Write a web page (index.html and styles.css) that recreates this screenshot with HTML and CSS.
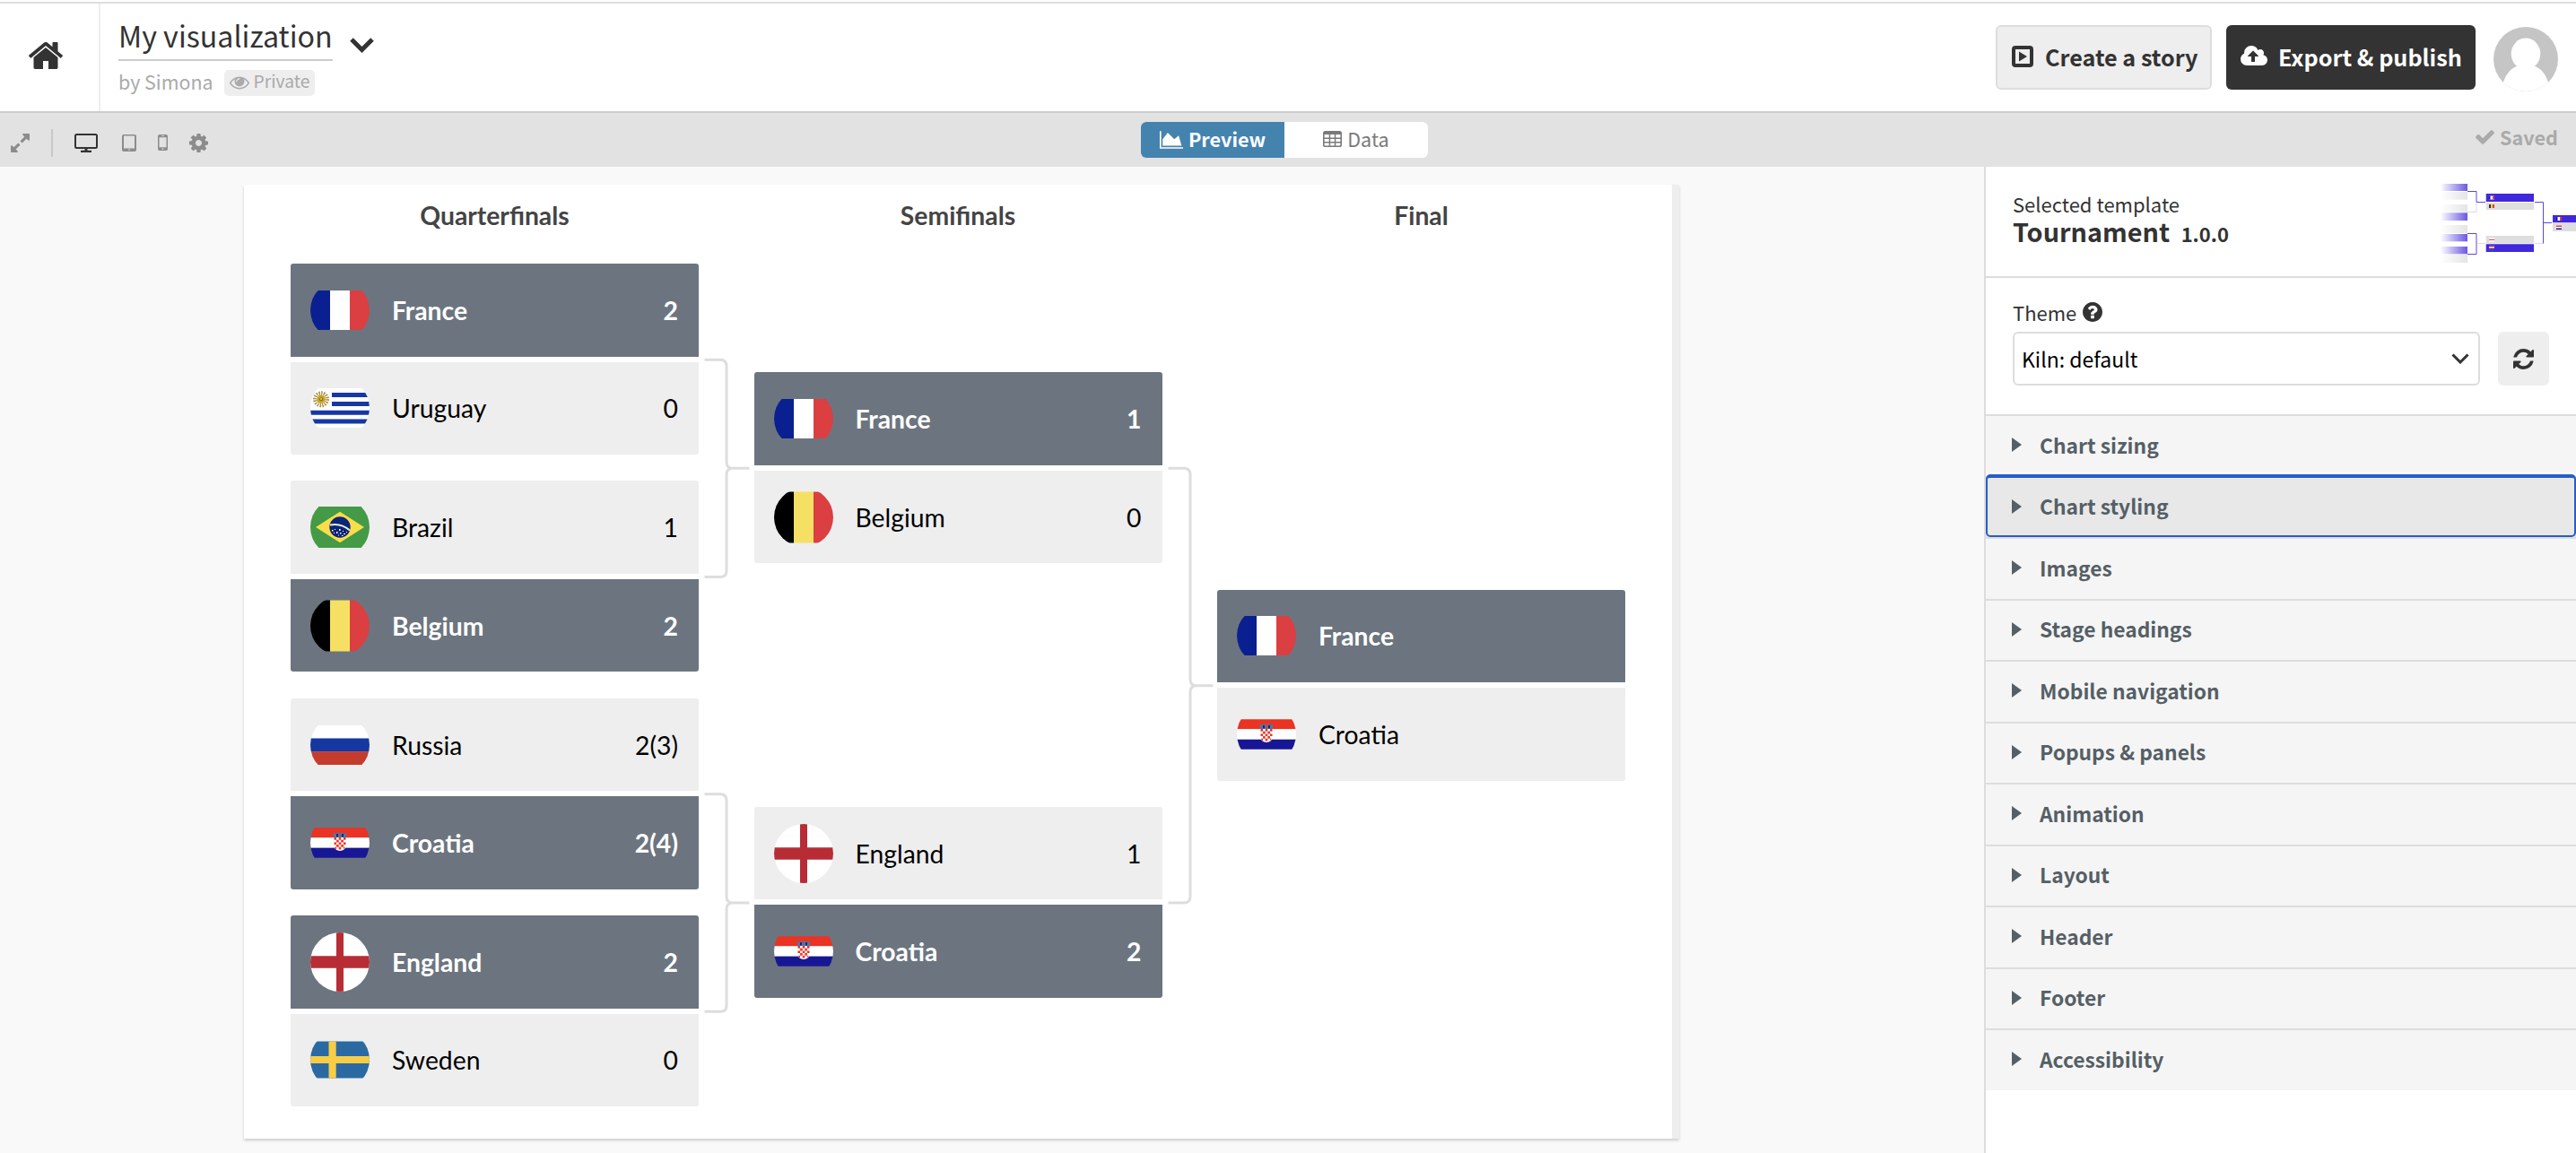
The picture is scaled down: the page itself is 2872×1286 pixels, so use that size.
FILE: index.html
```
<!DOCTYPE html>
<html lang="en">
<head>
  <meta charset="UTF-8" />
  <meta name="viewport" content="width=device-width, initial-scale=1.0" />
  <title>My visualization</title>
  <link rel="stylesheet" href="styles.css">
</head>
<body>
  <!-- flags, each drawn inside a 66x66 circle -->
  <svg class="defs" width="0" height="0">
    <symbol id="france" viewBox="0 0 66 66">
      <path fill="#0a2090" d="M0 11h22v44H0z"/><path fill="#fff" d="M22 11h22v44H22z"/><path fill="#db3f42" d="M44 11h22v44H44z"/>
    </symbol>
    <symbol id="belgium" viewBox="0 0 66 66">
      <path fill="#000" d="M0 4.500h22v57H0z"/><path fill="#f6e063" d="M22 4.500h22v57H22z"/><path fill="#db3f42" d="M44 4.500h22v57H44z"/>
    </symbol>
    <symbol id="russia" viewBox="0 0 66 66">
      <path fill="#fff" d="M0 11h66v15H0z"/><path fill="#1637a0" d="M0 25.600h66v15H0z"/><path fill="#c53b2c" d="M0 40.300h66V55H0z"/>
    </symbol>
    <symbol id="uruguay" viewBox="0 0 66 66">
      <path fill="#fff" d="M0 11h66v44H0z"/>
      <path fill="#1637a4" d="M24 16h42v5H24zM24 26h42v5H24zM0 35.700h66v5H0zM0 45.500h66v5H0z"/>
      <circle cx="12" cy="23.300" r="6.700" fill="none" stroke="#a18a35" stroke-width="4.600" stroke-dasharray="1.300 1.330"/>
      <circle cx="12" cy="23.300" r="4.600" fill="#c9a227"/><circle cx="12" cy="23.300" r="2" fill="#8a6d1c"/><circle cx="12" cy="23" r="1" fill="#f3d54e"/>
    </symbol>
    <symbol id="brazil" viewBox="0 0 66 66">
      <path fill="#449a46" d="M0 10h66v46H0z"/><path fill="#f9dd4a" d="M6 33l27-17.200L60 33 33 50.200z"/>
      <circle cx="33" cy="33" r="11.700" fill="#0c2577"/>
      <path d="M22 30.500q12-2.500 22 6" fill="none" stroke="#e8efe0" stroke-width="2"/>
      <path fill="#fff" d="M24 36h1.500v1.500H24zM27 35h1v1h-1zM29 38h1.500v2H29zM32 35h1.500v2H32zM33 39h1.500v1.500H33zM36 37h1v1h-1zM37 40h2v1h-2zM35 42h1.500v1H35zM40 38h1v1h-1zM26 39h1v1h-1zM31 41.500h1v1h-1z"/>
    </symbol>
    <symbol id="england" viewBox="0 0 66 66">
      <path fill="#fff" d="M0 0h66v66H0z"/><path fill="#b82c36" d="M29 0h8v66h-8zM0 26.200h66v13.600H0z"/>
    </symbol>
    <symbol id="sweden" viewBox="0 0 66 66">
      <path fill="#2b69a3" d="M0 12.500h66v41H0z"/><path fill="#f7cd46" d="M20.500 12.500h8.200v41h-8.200zM0 29h66v8H0z"/>
    </symbol>
    <symbol id="croatia" viewBox="0 0 66 66">
      <path fill="#ea3323" d="M0 16.300h66v11H0z"/><path fill="#fff" d="M0 27.300h66v11.400H0z"/><path fill="#171796" d="M0 38.700h66v11H0z"/>
      <path fill="#fff" d="M26.300 27h13.400v10q-1 4.500-6.700 5-5.700-.5-6.700-5z"/>
      <path fill="#ea3323" d="M26.500 27h2.600v2.700h-2.600zM31.700 27h2.600v2.700h-2.600zM36.900 27h2.600v2.700h-2.600zM29.100 29.700h2.600v2.700h-2.600zM34.300 29.700h2.600v2.700h-2.600zM26.500 32.400h2.600v2.700h-2.600zM31.700 32.400h2.600v2.700h-2.600zM36.900 32.400h2.600v2.700h-2.600zM29.100 35.100h2.600v2.700h-2.600zM34.300 35.100h2.600v2.700h-2.600zM27 37.800h2.100v2.100H28zM31.700 37.800h2.600v2.700h-2.600zM36.900 37.800h2l-2 2.400z"/>
      <path fill="#3f7fb8" d="M25.500 22l3 1 2-1.500 2.500.8 2.500-.8 2 1.500 3-1-1 5h-13z"/><path fill="#18247f" d="M29 23h2v3.500h-2zM35 23h2v3.500h-2z"/><path fill="#c8492e" d="M32 22.500h2v3.500h-2z"/>
    </symbol>
  </svg>

  <header class="header">
    <a class="home">
      <svg class="icon-home" viewBox="96 256 1600 1280"><path d="M1472 992v480q0 26-19 45t-45 19h-384v-384h-256v384h-384q-26 0-45-19t-19-45v-480q0-1 .5-3t.5-3l575-474 575 474q1 2 1 6zm223-69l-62 74q-8 9-21 11h-3q-13 0-21-7l-692-577-692 577q-12 8-24 7-13-2-21-11l-62-74q-8-10-7-23.500t11-21.500l719-599q32-26 76-26t76 26l244 204v-195q0-14 9-23t23-9h192q14 0 23 9t9 23v408l219 182q10 8 11 21.500t-7 23.500z"/></svg>
    </a>
    <div class="title-block">
      <div class="title-row">
        <h1 class="title">My visualization</h1>
        <svg class="icon-chevron" viewBox="0 0 27 17"><path d="M2 2l11.500 11.500L25 2" fill="none" stroke="#333" stroke-width="5"/></svg>
      </div>
      <div class="meta">
        <span class="author">by Simona</span>
        <span class="badge">
          <svg class="icon-eye" viewBox="0 384 1792 1152"><path d="M1664 960q-152-236-381-353 61 104 61 225 0 185-131.500 316.500t-316.500 131.500-316.500-131.500-131.500-316.500q0-121 61-225-229 117-381 353 133 205 333.500 326.500t434.500 121.500 434.500-121.500 333.500-326.500zm-720-384q0-20-14-34t-34-14q-125 0-214.500 89.500t-89.500 214.500q0 20 14 34t34 14 34-14 14-34q0-86 61-147t147-61q20 0 34-14t14-34zm848 384q0 34-20 69-140 230-376.500 368.500t-499.500 138.500-499.500-139-376.500-368q-20-35-20-69t20-69q140-229 376.500-368t499.500-139 499.500 139 376.500 368q20 35 20 69z"/></svg>
          <span>Private</span>
        </span>
      </div>
    </div>
    <div class="actions">
      <button class="btn btn-story">
        <svg class="icon-play" viewBox="0 0 24 24"><rect x="2" y="2" width="20" height="20" rx="2" fill="none" stroke="#333" stroke-width="4"/><path d="M8 6.500v11l9-5.500z"/></svg>
        <span>Create a story</span>
      </button>
      <button class="btn btn-export">
        <svg class="icon-cloud" viewBox="-64 128 1920 1408"><path d="M1216 864q0-14-9-23l-352-352q-9-9-23-9t-23 9l-351 351q-10 12-10 24 0 14 9 23t23 9h224v352q0 13 9.500 22.500t22.500 9.500h192q13 0 22.500-9.500t9.500-22.500v-352h224q13 0 22.500-9.500t9.500-22.500zm640 288q0 159-112.500 271.500t-271.500 112.500h-1088q-185 0-316.500-131.500t-131.500-316.500q0-130 70-240t188-165q-2-30-2-43 0-212 150-362t362-150q156 0 285.500 87t188.500 231q71-62 166-62 106 0 181 75t75 181q0 76-41 138 130 31 213.500 135.500t83.500 238.500z"/></svg>
        <span>Export &amp; publish</span>
      </button>
      <svg class="avatar" viewBox="0 0 72 72"><rect width="72" height="72" fill="#c5c5c5"/><ellipse cx="36" cy="30" rx="16.300" ry="17.500" fill="#fff"/><path fill="#fff" d="M29 43q-14 3-19 22v7h52v-7q-5-19-19-22z"/></svg>
    </div>
  </header>

  <div class="toolbar">
    <div class="devices">
      <svg class="icon-expand" viewBox="128 128 1536 1536"><path d="M883 1056q0 13-10 23l-332 332 144 144q19 19 19 45t-19 45-45 19h-448q-26 0-45-19t-19-45v-448q0-26 19-45t45-19 45 19l144 144 332-332q10-10 23-10t23 10l114 114q10 10 10 23zm781-864v448q0 26-19 45t-45 19-45-19l-144-144-332 332q-10 10-23 10t-23-10l-114-114q-10-10-10-23t10-23l332-332-144-144q-19-19-19-45t19-45 45-19h448q26 0 45 19t19 45z"/></svg>
      <span class="divider"></span>
      <svg class="icon-desktop" viewBox="0 0 26 21"><rect x="1" y="1" width="24" height="15" rx="1.500" fill="none" stroke="#333" stroke-width="2"/><path d="M11.500 16h3v3h-3zM7 18.800h12V21H7z"/></svg>
      <svg class="icon-tablet" viewBox="0 0 16 19"><path fill-rule="evenodd" d="M2 0h12q2 0 2 2v15q0 2-2 2H2q-2 0-2-2V2q0-2 2-2zm0 1.500V15.500h12V1.500zM7.200 16.500v1.300h1.600v-1.300z"/></svg>
      <svg class="icon-phone" viewBox="0 0 11 18"><path fill-rule="evenodd" d="M2 0h7q2 0 2 2v14q0 2-2 2H2q-2 0-2-2V2q0-2 2-2zm-.5 3.200V14.200h8V3.200zM4 1.300v.8h3v-.8zM4.700 15.300v1.500h1.600v-1.500z"/></svg>
      <svg class="icon-cog" viewBox="128 128 1536 1536"><path d="M1152 896q0-106-75-181t-181-75-181 75-75 181 75 181 181 75 181-75 75-181zm512-109v222q0 12-8 23t-20 13l-185 28q-19 54-39 91 35 50 107 138 10 12 10 25t-9 23q-27 37-99 108t-94 71q-12 0-26-9l-138-108q-44 23-91 38-16 136-29 186-7 28-36 28h-222q-14 0-24.500-8.500t-11.500-21.500l-28-184q-49-16-90-37l-141 107q-10 9-25 9-14 0-25-11-126-114-165-168-7-10-7-23 0-12 8-23 15-21 51-66.500t54-70.500q-27-50-41-99l-183-27q-13-2-21-12.500t-8-23.500v-222q0-12 8-23t19-13l186-28q14-46 39-92-40-57-107-138-10-12-10-24 0-10 9-23 26-36 98.500-107.500t94.500-71.500q13 0 26 10l138 107q44-23 91-38 16-136 29-186 7-28 36-28h222q14 0 24.500 8.500t11.500 21.500l28 184q49 16 90 37l142-107q9-9 24-9 13 0 25 10 129 119 165 170 7 8 7 22 0 12-8 23-15 21-51 66.500t-54 70.500q26 50 41 98l183 28q13 2 21 12.500t8 23.500z"/></svg>
    </div>
    <div class="tabs">
      <span class="tab active">
        <svg class="icon-chart" viewBox="-128 128 2048 1536"><path d="M1920 1536v128h-2048v-1536h128v1408h1920zm-384-1024l256 896h-1664v-576l448-576 576 576z"/></svg>
        <span>Preview</span>
      </span>
      <span class="tab">
        <svg class="icon-table" viewBox="0 0 21 18"><rect x=".8" y=".8" width="19.400" height="16.400" rx="1.800" fill="none" stroke="#7a7a7a" stroke-width="1.600"/><path d="M1 1h19v3H1zM6.700 3h1.500v14H6.700zM12.800 3h1.500v14h-1.500zM1 7.500h19V9H1zM1 12h19v1.500H1z"/></svg>
        <span>Data</span>
      </span>
    </div>
    <div class="saved">
      <svg class="icon-check" viewBox="121 334 1550 1188"><path d="M1671 566q0 40-28 68l-724 724-136 136q-28 28-68 28t-68-28l-136-136-362-362q-28-28-28-68t28-68l136-136q28-28 68-28t68 28l294 295 656-657q28-28 68-28t68 28l136 136q28 28 28 68z"/></svg>
      <span>Saved</span>
    </div>
  </div>

  <main class="main">
    <section class="preview">
      <div class="chart">
        <div class="headings">
          <span>Quarterfinals</span>
          <span>Semifinals</span>
          <span>Final</span>
        </div>
        <div class="bracket">
          <div class="stage">
            <div class="match">
              <div class="team win"><svg class="flag"><use href="#france"/></svg><span>France</span><span class="score">2</span></div>
              <div class="team"><svg class="flag"><use href="#uruguay"/></svg><span>Uruguay</span><span class="score">0</span></div>
            </div>
            <div class="match">
              <div class="team"><svg class="flag"><use href="#brazil"/></svg><span>Brazil</span><span class="score">1</span></div>
              <div class="team win"><svg class="flag"><use href="#belgium"/></svg><span>Belgium</span><span class="score">2</span></div>
            </div>
            <div class="match">
              <div class="team"><svg class="flag"><use href="#russia"/></svg><span>Russia</span><span class="score">2(3)</span></div>
              <div class="team win"><svg class="flag"><use href="#croatia"/></svg><span>Croatia</span><span class="score">2(4)</span></div>
            </div>
            <div class="match">
              <div class="team win"><svg class="flag"><use href="#england"/></svg><span>England</span><span class="score">2</span></div>
              <div class="team"><svg class="flag"><use href="#sweden"/></svg><span>Sweden</span><span class="score">0</span></div>
            </div>
          </div>
          <svg class="links" viewBox="0 0 61.500 969.300">
            <path d="M6.500 121.200H24q7 0 7 7V235.300q0 7 7 7H56.500M6.500 363.500H24q7 0 7-7V249.300q0-7 7-7"/>
            <path d="M6.500 605.800H24q7 0 7 7V720q0 7 7 7H56.500M6.500 848.200H24q7 0 7-7V734q0-7 7-7"/>
          </svg>
          <div class="stage">
            <div class="match">
              <div class="team win"><svg class="flag"><use href="#france"/></svg><span>France</span><span class="score">1</span></div>
              <div class="team"><svg class="flag"><use href="#belgium"/></svg><span>Belgium</span><span class="score">0</span></div>
            </div>
            <div class="match">
              <div class="team"><svg class="flag"><use href="#england"/></svg><span>England</span><span class="score">1</span></div>
              <div class="team win"><svg class="flag"><use href="#croatia"/></svg><span>Croatia</span><span class="score">2</span></div>
            </div>
          </div>
          <svg class="links" viewBox="0 0 61.500 969.300">
            <path d="M6.500 242.300H24q7 0 7 7V477.700q0 7 7 7H56.500M6.500 727H24q7 0 7-7V491.700q0-7 7-7"/>
          </svg>
          <div class="stage">
            <div class="match">
              <div class="team win"><svg class="flag"><use href="#france"/></svg><span>France</span></div>
              <div class="team"><svg class="flag"><use href="#croatia"/></svg><span>Croatia</span></div>
            </div>
          </div>
        </div>
      </div>
    </section>

    <aside class="sidebar">
      <div class="template">
        <div class="template-info">
          <div class="template-label">Selected template</div>
          <div class="template-name">Tournament <small>1.0.0</small></div>
        </div>
        <svg class="thumb" viewBox="0 0 152 96">
          <defs>
            <linearGradient id="fadeBlue"><stop offset="0" stop-color="#fff"/><stop offset="1" stop-color="#6a58e2"/></linearGradient>
            <linearGradient id="fadeGrey"><stop offset="0" stop-color="#fff"/><stop offset="1" stop-color="#e4e4e4"/></linearGradient>
          </defs>
          <g fill="url(#fadeBlue)"><rect x="1" y="5" width="30" height="8"/><rect x="1" y="37.300" width="30" height="8.700"/><rect x="1" y="61" width="30" height="8.300"/><rect x="1" y="75" width="30" height="8.300"/></g>
          <g fill="url(#fadeGrey)"><rect x="1" y="14" width="30" height="8.700"/><rect x="1" y="28" width="30" height="8.700"/><rect x="1" y="51" width="30" height="9"/><rect x="1" y="84" width="30" height="9"/></g>
          <g fill="none" stroke="#5c48e0"><path d="M31 13.500h10v12h10M31 60.500h10v23H31M106 25.500h9.500v46M115.500 48.500h9.500"/><path stroke="#dcd8f8" d="M31 36.500h10v-10M42 71.500h9M106 71.500h9"/></g>
          <path fill="#4028dd" d="M51.700 16H105v9H51.700zM51.700 72.300H105V81H51.700zM126 40h26v8.300h-26z"/>
          <path fill="#dedede" d="M51.700 26H105v8H51.700zM51.700 63H105v8.500H51.700zM126 49h26v9h-26z"/>
          <path fill="#fff" d="M55 18.500h6v4h-6zM57 28h3v4h-3zM55 65.500h6v4h-6zM55 74.500h6v4h-6zM130 42h6v4h-6zM130 51.500h6v4h-6z"/>
          <path fill="#db3f42" d="M59 18.500h2v4h-2zM59 28h2v4h-2zM55 67h6v1h-6zM55 74.500h6v1.300h-6zM134 42h2v4h-2zM130 51.500h6V53h-6z"/>
          <path fill="#171796" d="M55 18.500h1.500v4H55zM55 77h6v1.500h-6zM130 42h1.500v4H130zM130 54.500h6V56h-6z"/><path d="M55 28h2v4h-2z"/><path fill="#f6c743" d="M57 28h2v4h-2z"/>
        </svg>
      </div>
      <div class="theme">
        <div class="theme-label">
          <span>Theme</span>
          <svg class="icon-help" viewBox="128 128 1536 1536"><path d="M1024 1376v-192q0-14-9-23t-23-9h-192q-14 0-23 9t-9 23v192q0 14 9 23t23 9h192q14 0 23-9t9-23zm256-672q0-88-55.500-163t-138.500-116-170-41q-243 0-371 213-15 24 8 42l132 100q7 6 19 6 16 0 25-12 53-68 86-92 34-24 86-24 48 0 85.500 26t37.500 59q0 38-20 61t-68 45q-63 28-115.500 86.500t-52.500 125.500v36q0 14 9 23t23 9h192q14 0 23-9t9-23q0-19 21.500-49.500t54.500-49.500q32-18 49-28.500t46-35 44.500-48 28-60.500 12.500-81zm384 192q0 209-103 385.500t-279.500 279.500-385.500 103-385.500-103-279.500-279.500-103-385.500 103-385.500 279.500-279.500 385.500-103 385.500 103 279.500 279.500 103 385.500z"/></svg>
        </div>
        <div class="theme-row">
          <div class="select">
            <span>Kiln: default</span>
            <svg class="icon-caret" viewBox="0 0 20 12"><path d="M1.500 1.500L10 10l8.500-8.500" fill="none" stroke="#333" stroke-width="3"/></svg>
          </div>
          <button class="refresh">
            <svg class="icon-refresh" viewBox="128 128 1536 1536"><path d="M1639 1056q0 5-1 7-64 268-268 434.500t-478 166.500q-146 0-282.500-55t-243.500-157l-129 129q-19 19-45 19t-45-19-19-45v-448q0-26 19-45t45-19h448q26 0 45 19t19 45-19 45l-137 137q71 66 161 102t187 36q134 0 250-65t186-179q11-17 53-117 8-23 30-23h192q13 0 22.500 9.500t9.500 22.500zm25-800v448q0 26-19 45t-45 19h-448q-26 0-45-19t-19-45 19-45l138-138q-148-137-349-137-134 0-250 65t-186 179q-11 17-53 117-8 23-30 23h-199q-13 0-22.500-9.500t-9.500-22.500v-7q65-268 270-434.500t480-166.500q146 0 284 55.500t245 156.500l130-129q19-19 45-19t45 19 19 45z"/></svg>
          </button>
        </div>
      </div>
      <ul class="settings">
        <li><span>Chart sizing</span></li>
        <li class="focused"><span>Chart styling</span></li>
        <li><span>Images</span></li>
        <li><span>Stage headings</span></li>
        <li><span>Mobile navigation</span></li>
        <li><span>Popups &amp; panels</span></li>
        <li><span>Animation</span></li>
        <li><span>Layout</span></li>
        <li><span>Header</span></li>
        <li><span>Footer</span></li>
        <li><span>Accessibility</span></li>
      </ul>
    </aside>
  </main>
</body>
</html>
```
FILE: styles.css
```
* {
  box-sizing: border-box;
}
body {
  margin: 0;
  height: 1286px;
  overflow: hidden;
  display: flex;
  flex-direction: column;
  font-family: "Noto Sans CJK SC", "Open Sans", sans-serif;
  font-size: 22px;
  color: #333;
  background: #fff;
}
svg {
  display: block;
  flex: none;
  fill: currentColor;
}
.defs {
  position: absolute;
}
button {
  font: inherit;
  color: inherit;
  border: 0;
  padding: 0;
}

/* header */
.header {
  display: flex;
  height: 124px;
  margin-top: 2px;
  border-top: 2px solid #ddd;
  border-bottom: 2px solid #ccc;
}
.home {
  display: flex;
  align-items: center;
  width: 112px;
  padding-left: 32px;
  padding-bottom: 4px;
  border-right: 2px solid #eee;
}
.icon-home {
  width: 38px;
  height: 30px;
}
.title-block {
  padding: 15px 0 0 20px;
}
.title-row {
  display: flex;
  align-items: flex-start;
}
.title {
  margin: 0;
  font-size: 32.2px;
  font-weight: 400;
  line-height: 40px;
  padding-bottom: 7px;
  border-bottom: 2px solid #ccc;
}
.icon-chevron {
  width: 27px;
  height: 17px;
  margin: 23px 0 0 19px;
}
.meta {
  display: flex;
  align-items: center;
  gap: 12px;
  margin-top: 10px;
  color: #aaa;
  font-size: 21.4px;
  line-height: 25px;
}
.author {
  padding-bottom: 4px;
}
.badge {
  display: flex;
  align-items: center;
  gap: 5px;
  height: 29px;
  padding: 0 6px;
  border-radius: 5px;
  background: #eee;
  font-size: 19.3px;
}
.badge span {
  padding-bottom: 4px;
}
.icon-eye {
  width: 22px;
  height: 15px;
}
.actions {
  display: flex;
  margin: 24px 20px 0 auto;
}
.btn {
  display: flex;
  align-items: center;
  height: 72px;
  border-radius: 6px;
  font-size: 25.2px;
  font-weight: 700;
  line-height: 36px;
}
.btn span {
  padding-bottom: 3px;
}
.btn-story {
  width: 241px;
  margin-right: 16px;
  padding-left: 16px;
  gap: 13px;
  border: 2px solid #ddd;
  background: #eee;
}
.btn-export {
  width: 278px;
  margin-right: 20px;
  padding-left: 16px;
  gap: 12px;
  background: #333;
  color: #fff;
}
.icon-play {
  width: 24px;
  height: 24px;
}
.icon-cloud {
  width: 30px;
  height: 22px;
}
.btn svg {
  margin-bottom: 2px;
}
.btn-export svg {
  margin-bottom: 4px;
}
.avatar {
  width: 72px;
  height: 72px;
  margin-top: 2px;
  border-radius: 50%;
}

/* toolbar */
.toolbar {
  display: grid;
  grid-template-columns: 1272px 320px 1fr;
  align-items: center;
  height: 60px;
  background: #e2e2e2;
}
.devices {
  display: flex;
  align-items: center;
  padding: 6px 0 0 12px;
  color: #8c8c8c;
}
.icon-expand {
  width: 21px;
  height: 21px;
}
.divider {
  width: 2px;
  height: 31px;
  margin: 0 24px;
  background: #c8c8c8;
}
.icon-desktop {
  width: 26px;
  height: 21px;
  color: #333;
}
.icon-tablet {
  width: 16px;
  height: 19px;
  margin: 0 24px 0 27px;
}
.icon-phone {
  width: 11px;
  height: 18px;
  margin-right: 24px;
}
.icon-cog {
  width: 21px;
  height: 21px;
}
.tabs {
  display: flex;
  height: 40px;
  border-radius: 6px;
  overflow: hidden;
  background: #fff;
  color: #7a7a7a;
}
.tab {
  flex: 1;
  display: flex;
  align-items: center;
  justify-content: center;
  gap: 6px;
  font-size: 21.6px;
  line-height: 32px;
}
.tab.active {
  background: #4583af;
  color: #fff;
  font-weight: 700;
}
.tab span {
  padding-bottom: 3px;
}
.icon-chart {
  width: 26px;
  height: 20px;
}
.icon-table {
  width: 21px;
  height: 18px;
  margin-bottom: 2px;
}
.saved {
  display: flex;
  align-items: center;
  justify-content: flex-end;
  gap: 6px;
  padding: 0 20px 6px 0;
  color: #aaa;
  font-size: 21.6px;
  font-weight: 700;
  line-height: 32px;
}
.icon-check {
  width: 21px;
  height: 16px;
}

.main {
  flex: 1;
  display: flex;
}

/* chart preview */
.preview {
  flex: 1;
  padding: 20px 0 16px 272px;
  background: #f9f9f9;
}
.chart {
  width: 1600px;
  height: 1064px;
  padding: 17px 0 0 52px;
  border-right: 8px solid #eee;
  background: #fff;
  box-shadow: 0 2px 3px rgba(0, 0, 0, 0.18);
  font-family: Lato, sans-serif;
  overflow: hidden;
}
.headings {
  display: flex;
  gap: 61.5px;
  height: 56.5px;
  color: #444;
  font-size: 28.3px;
  font-weight: 700;
  line-height: 34px;
}
.headings span {
  width: 455px;
  text-align: center;
}
.bracket {
  display: flex;
  height: 969.3px;
}
.stage {
  display: flex;
  flex-direction: column;
  justify-content: space-around;
  width: 455px;
}
.match {
  display: flex;
  flex-direction: column;
  gap: 6px;
  border-radius: 3px;
  overflow: hidden;
}
.team {
  display: flex;
  align-items: center;
  gap: 25px;
  height: 103.5px;
  padding: 0 23px 0 22px;
  background: #eee;
  color: #000;
  font-size: 28.3px;
}
.team.win {
  background: #6c757f;
  color: #fff;
  font-weight: 700;
}
.score {
  margin-left: auto;
}
.flag {
  width: 66px;
  height: 66px;
  border-radius: 50%;
}
.links {
  width: 61.5px;
  height: 969.3px;
}
.links path {
  fill: none;
  stroke: #ddd;
  stroke-width: 3;
}

/* settings sidebar */
.sidebar {
  width: 660px;
  border-left: 2px solid #ddd;
  background: #fff;
}
.template {
  display: flex;
  justify-content: space-between;
  height: 124px;
  padding: 14px 0 0 30px;
  border-bottom: 2px solid #ddd;
}
.template-label {
  margin-top: 11px;
  line-height: 32px;
}
.template-name {
  font-size: 28.8px;
  font-weight: 700;
  line-height: 30px;
}
.template-name small {
  margin-left: 6px;
  font-size: 22px;
}
.thumb {
  width: 152px;
  height: 96px;
}
.theme {
  height: 152px;
  padding: 19px 30px 0;
}
.theme-label {
  display: flex;
  align-items: center;
  gap: 7px;
  height: 38px;
  margin-bottom: 3px;
  line-height: 32px;
}
.icon-help {
  width: 22px;
  height: 22px;
}
.theme-row {
  display: flex;
  gap: 20px;
}
.select {
  display: flex;
  align-items: center;
  justify-content: space-between;
  width: 521px;
  height: 60px;
  padding: 0 10px 0 8px;
  border: 2px solid #ddd;
  border-radius: 6px;
  color: #000;
  font-size: 23px;
}
.icon-caret {
  width: 20px;
  height: 12px;
}
.refresh {
  display: flex;
  align-items: center;
  justify-content: center;
  width: 57px;
  height: 60px;
  border-radius: 6px;
  background: #eee;
}
.icon-refresh {
  width: 23px;
  height: 23px;
}
.settings {
  margin: 0;
  padding: 0;
  list-style: none;
}
.settings li {
  position: relative;
  display: flex;
  align-items: center;
  gap: 20px;
  height: 68.5px;
  padding-left: 29px;
  border-top: 2px solid #ddd;
  background: #f5f5f5;
  color: #555f66;
  font-size: 22.8px;
  font-weight: 700;
}
.settings li::before {
  content: "";
  margin-bottom: 2px;
  border: solid transparent;
  border-width: 8px 0 8px 11px;
  border-left-color: #555f66;
}
.settings span {
  padding-bottom: 2px;
}
.settings .focused {
  background: #e8e8e8;
}
/* focus ring over the row borders */
.focused::after {
  content: "";
  position: absolute;
  top: -3.5px;
  right: 0;
  bottom: 0;
  left: 0;
  border: 2px solid #265dc9;
  border-top-width: 4px;
  border-radius: 5px;
  box-shadow: 0 -2px 0 #fff;
}
```
